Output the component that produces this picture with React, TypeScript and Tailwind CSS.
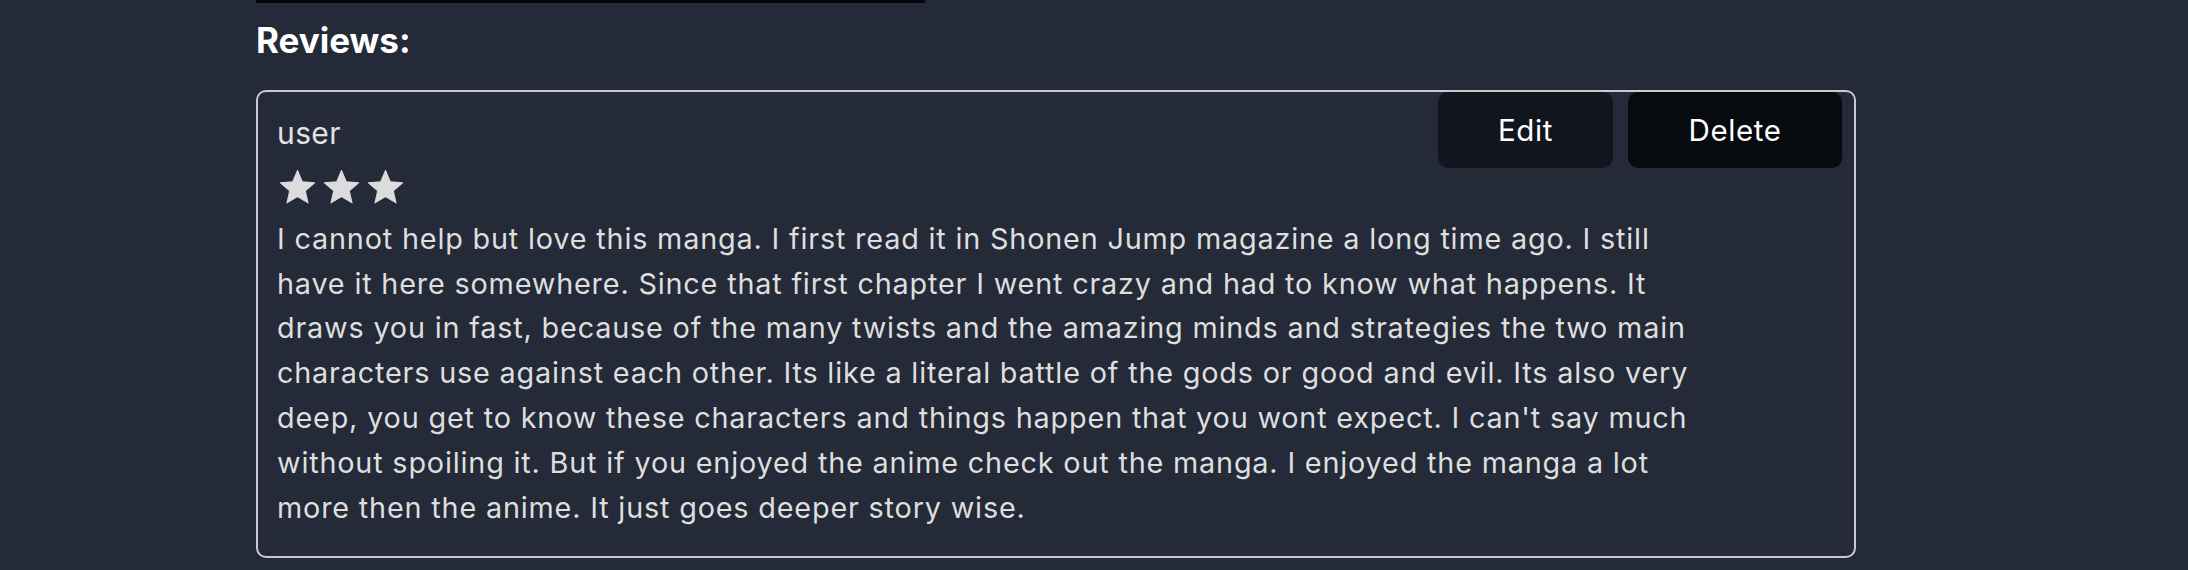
import React from "react";

interface Review {
  id: number;
  user: string;
  rating: number;
  text: string;
}

const reviews: Array<Review> = [
  {
    id: 1,
    user: "user",
    rating: 3,
    text: "I cannot help but love this manga. I first read it in Shonen Jump magazine a long time ago. I still have it here somewhere. Since that first chapter I went crazy and had to know what happens. It draws you in fast, because of the many twists and the amazing minds and strategies the two main characters use against each other. Its like a literal battle of the gods or good and evil. Its also very deep, you get to know these characters and things happen that you wont expect. I can't say much without spoiling it. But if you enjoyed the anime check out the manga. I enjoyed the manga a lot more then the anime. It just goes deeper story wise.",
  },
];

const Star: React.FC = () => (
  <svg viewBox="0 0 24 24" className="w-[41px] h-[41px] text-[#dcdcdc]">
    <path
      d="M12 17.27L18.18 21l-1.64-7.03L22 9.24l-7.19-.61L12 2 9.19 8.63 2 9.24l5.46 4.73L5.82 21z"
      fill="currentColor"
      stroke="currentColor"
      strokeWidth="0.6"
      strokeLinejoin="round"
    />
  </svg>
);

const App: React.FC = () => {
  return (
    <div className="min-h-screen w-full bg-[#242a37] font-['Inter','Liberation_Sans',sans-serif]">
      <div className="ml-[256px] w-[1600px]">
        {/* bottom edge of the cover image above */}
        <div className="h-[3px] w-[669px] bg-[#040609]"></div>

        <h2 className="mt-[17px] text-[35px] leading-[40px] font-bold text-white">
          Reviews:
        </h2>

        {reviews.map((review) => (
          <div
            key={review.id}
            className="relative mt-[30px] rounded-[10px] border-2 border-[#c9cace] pt-[19px] px-[19px] pb-[26px]"
          >
            <div className="text-[30px] leading-[44.8px] tracking-[0.4px] text-[#e2e2e4]">
              {review.user}
            </div>
            <div className="mt-[11px] flex gap-[3px]">
              {Array.from({ length: review.rating }).map((_, i) => (
                <Star key={i} />
              ))}
            </div>
            <p className="mt-[9px] max-w-[1430px] text-[28.8px] leading-[44.8px] tracking-[0.82px] text-[#dedede]">
              {review.text}
            </p>

            <div className="absolute top-0 right-[12px] flex gap-[15px]">
              <button className="h-[76px] w-[175px] flex items-center justify-center rounded-[10px] bg-[#11161e] text-[29.5px] tracking-[0.6px] text-white">
                Edit
              </button>
              <button className="h-[76px] w-[214px] flex items-center justify-center rounded-[10px] bg-[#070a0e] text-[29.5px] tracking-[0.6px] text-white">
                Delete
              </button>
            </div>
          </div>
        ))}
      </div>
    </div>
  );
};

export default App;
